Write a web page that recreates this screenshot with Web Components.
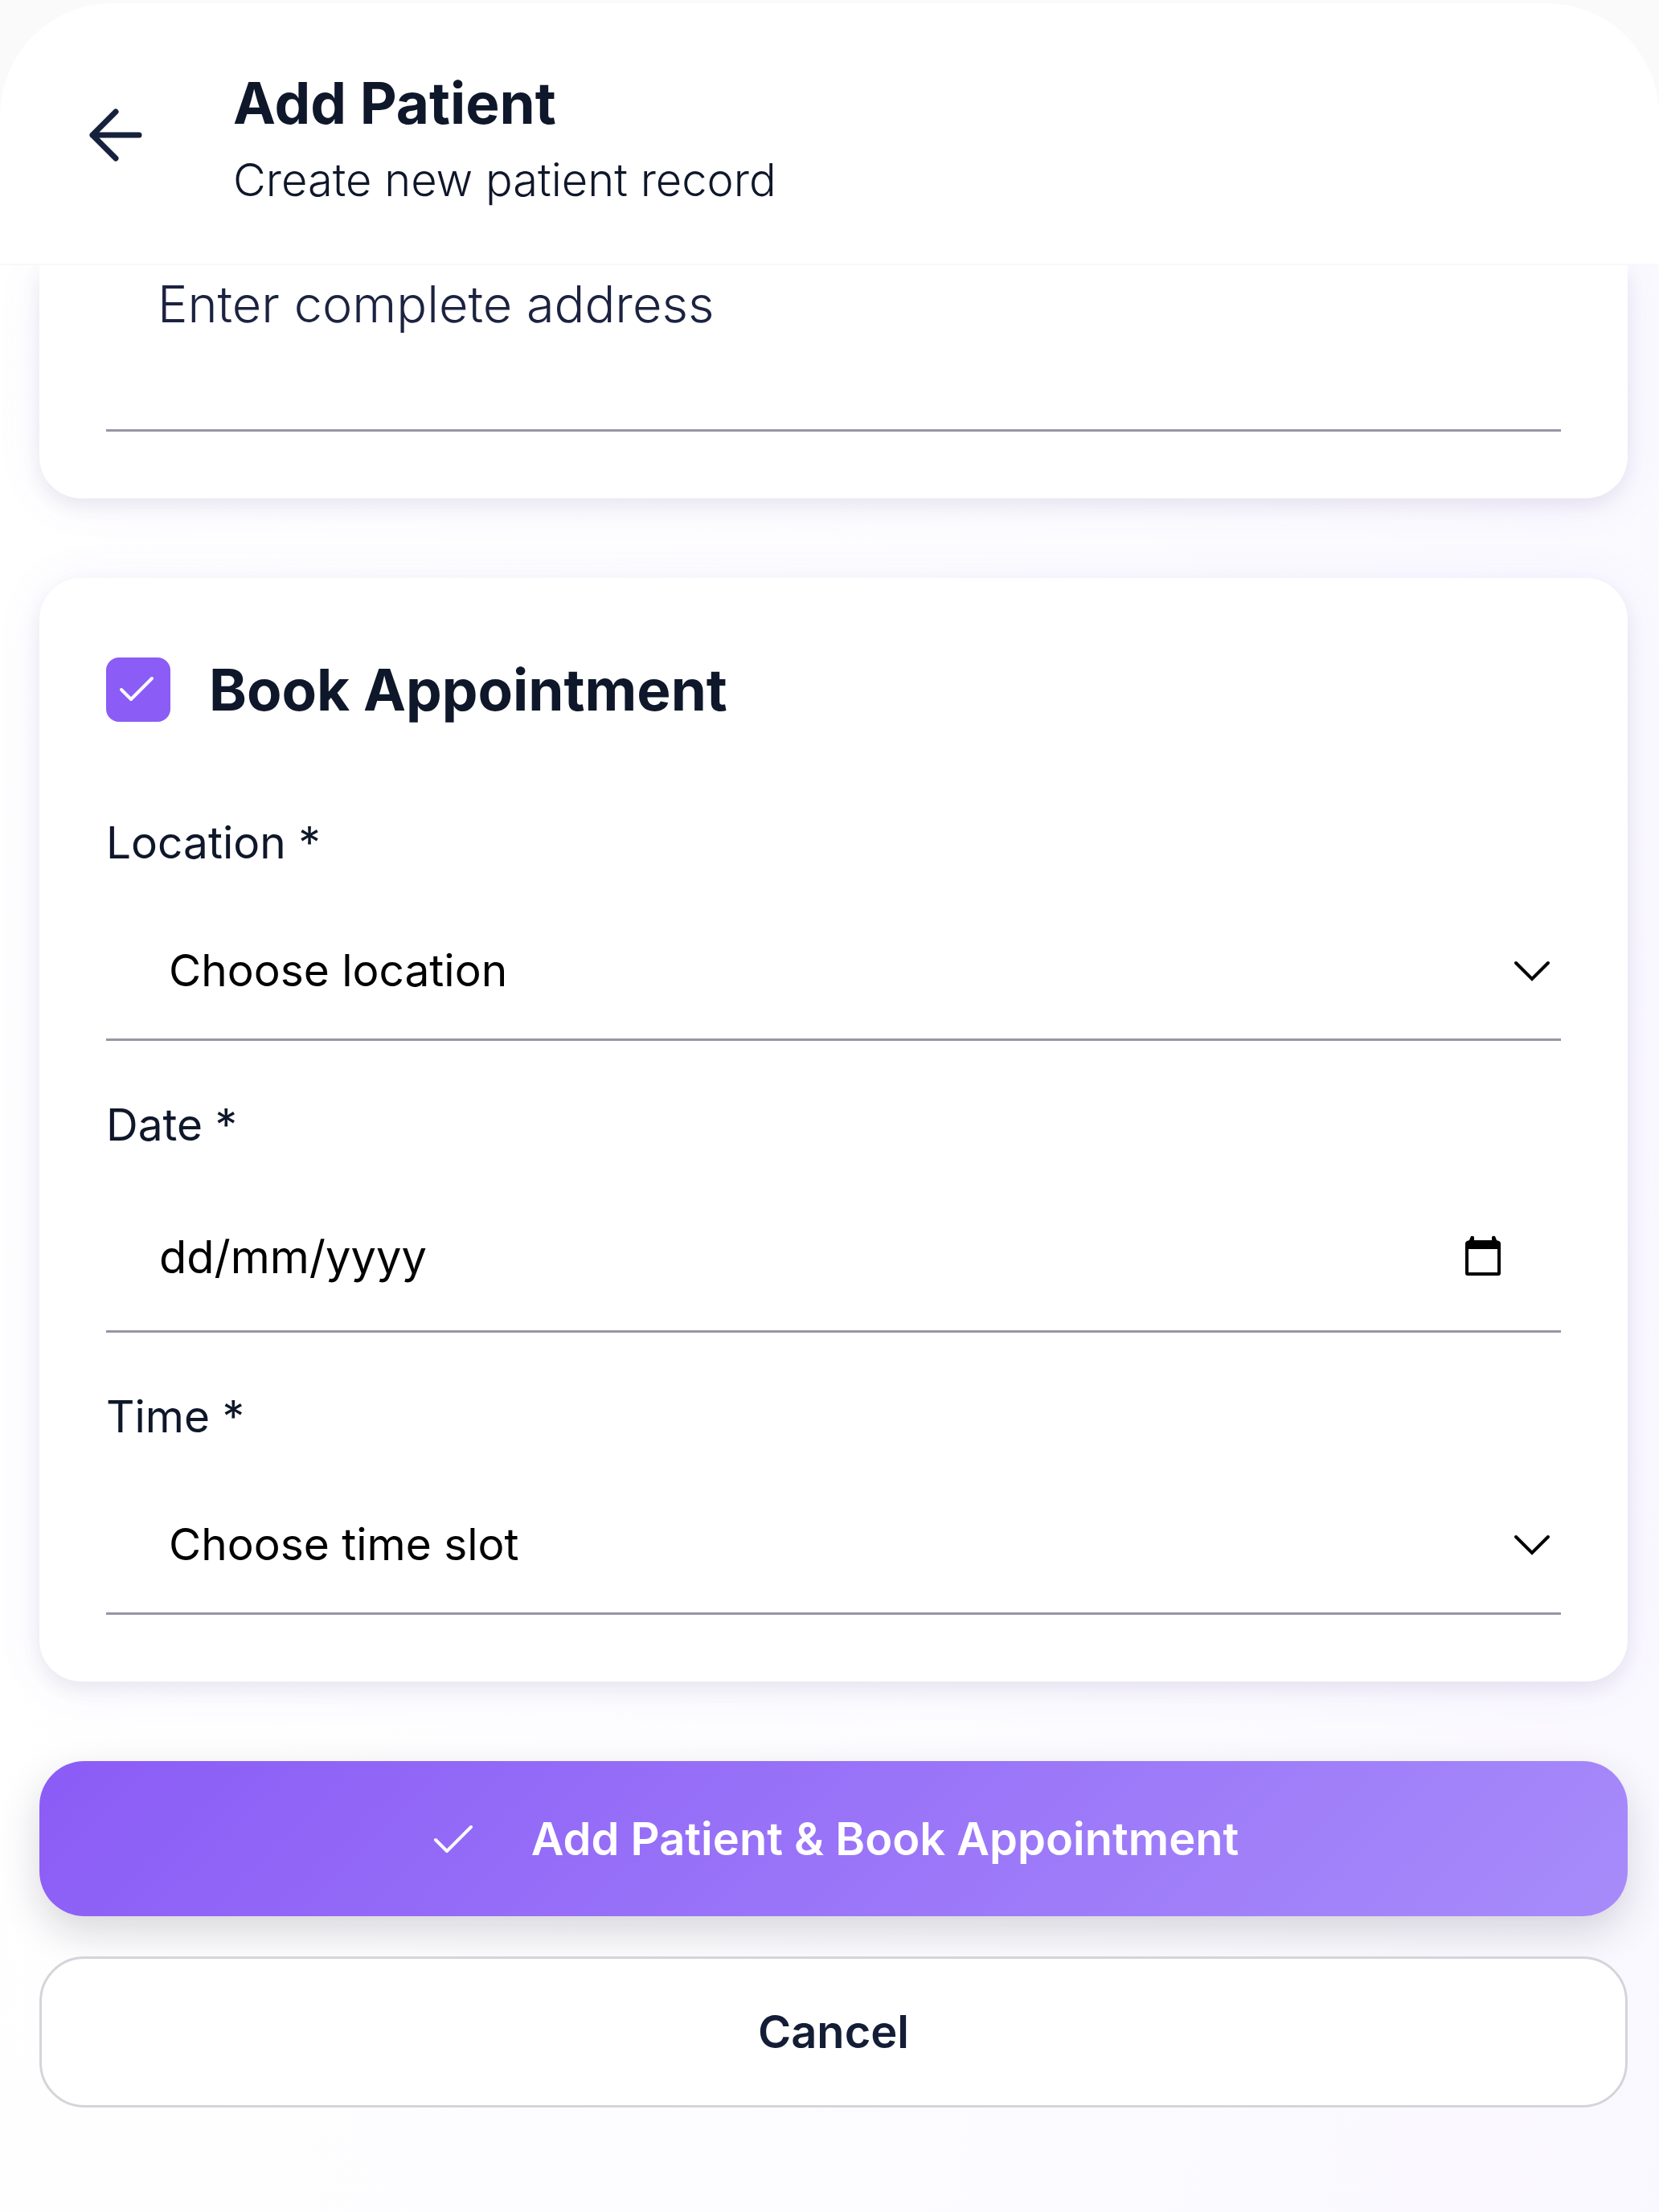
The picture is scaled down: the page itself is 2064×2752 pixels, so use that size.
<!doctype html>
<html lang="en">
<head>
    <meta charset="UTF-8">
    <meta name="viewport" content="width=device-width, initial-scale=1.0">
    <title>Add Patient</title>
    <style>
        body {
            --ink: #0f172a;
            --line: #9696a6;
            --accent: #8b5cf6;
            --accent-light: #a78bfa;
            --text-large: 56px;
            margin: 0;
            min-height: 100vh;
            color: var(--ink);
            font-family: Inter, "Liberation Sans", sans-serif;
            font-size: 55px;
            line-height: 64px;
            background: linear-gradient(100deg, #ffffff 0%, #fdfdff 50%, #faf8ff 100%);
        }
        main {
            display: flex;
            flex-direction: column;
            gap: 99px;
            padding: 0 39px 128px 49px;
        }
        .actions {
            display: flex;
            flex-direction: column;
            gap: 50px;
        }
    </style>
</head>
<body>
<page-header>
    <span slot="title">Add Patient</span>
    <span slot="subtitle">Create new patient record</span>
</page-header>
<main>
    <form-card continued>
        <address-field placeholder="Enter complete address"></address-field>
    </form-card>
    <form-card>
        <check-heading>Book Appointment</check-heading>
        <select-field label="Location *" empty="Choose location"></select-field>
        <date-field label="Date *" placeholder="dd/mm/yyyy"></date-field>
        <select-field label="Time *" empty="Choose time slot"></select-field>
    </form-card>
    <div class="actions">
        <action-button primary>Add Patient &amp; Book Appointment</action-button>
        <action-button>Cancel</action-button>
    </div>
</main>
<script>
    class PageHeader extends HTMLElement {
        constructor() {
            super();
            const shadowRoot = this.attachShadow({mode: 'open'});
            shadowRoot.innerHTML = `
                <style>
                    :host { display: flow-root; background: #fafafa; }
                    header {
                        display: flex;
                        align-items: center;
                        gap: 98px;
                        margin-top: 4px;
                        padding: 78px 96px 74px;
                        border-radius: 140px 140px 0 0;
                        border-bottom: 2px solid #f8f8fa;
                        background: #fff;
                    }
                    button {
                        display: flex;
                        padding: 0;
                        border: 0;
                        background: none;
                        color: #16213c;
                    }
                    .titles { display: flex; flex-direction: column; gap: 20px; }
                    h1 { margin: 0; font-size: 71px; line-height: 92px; font-weight: 700; }
                    p { margin: 0; font-size: var(--text-large); line-height: 60px; font-weight: 300; }
                </style>
                <header>
                    <button type="button" aria-label="Back">
                        <svg width="96" height="96" viewBox="0 0 96 96" fill="none" stroke="currentColor"
                             stroke-width="7" stroke-linecap="round" stroke-linejoin="round">
                            <path d="M77 48H19M48 19L19 48L48 77"/>
                        </svg>
                    </button>
                    <div class="titles">
                        <h1><slot name="title"></slot></h1>
                        <p><slot name="subtitle"></slot></p>
                    </div>
                </header>`;
        }
    }

    class FormCard extends HTMLElement {
        constructor() {
            super();
            const shadowRoot = this.attachShadow({mode: 'open'});
            shadowRoot.innerHTML = `
                <style>
                    :host {
                        display: flex;
                        flex-direction: column;
                        gap: 72px;
                        padding: 83px;
                        border-radius: 52px;
                        background: #fff;
                        box-shadow: 0 10px 24px rgba(30, 20, 60, 0.07), 0 4px 60px rgba(110, 90, 220, 0.07);
                    }
                    /* the upper part of this card is scrolled under the header */
                    :host([continued]) {
                        padding-top: 0;
                        border-top-left-radius: 0;
                        border-top-right-radius: 0;
                        clip-path: inset(0 -80px -98px -80px);
                    }
                </style>
                <slot></slot>`;
        }
    }

    class AddressField extends HTMLElement {
        constructor() {
            super();
            const shadowRoot = this.attachShadow({mode: 'open'});
            shadowRoot.innerHTML = `
                <style>
                    :host { display: block; }
                    textarea {
                        display: block;
                        box-sizing: border-box;
                        width: 100%;
                        height: 207px;
                        padding: 8px 64px;
                        border: 0;
                        border-bottom: 3px solid var(--line);
                        resize: none;
                        overflow: hidden;
                        background: none;
                        font: inherit;
                        font-size: 63px;
                        line-height: 80px;
                        font-weight: 300;
                    }
                    textarea::placeholder { color: #1c2340; }
                </style>
                <textarea aria-label="Address"></textarea>`;
            shadowRoot.querySelector('textarea').placeholder = this.getAttribute('placeholder');
        }
    }

    class CheckHeading extends HTMLElement {
        constructor() {
            super();
            const shadowRoot = this.attachShadow({mode: 'open'});
            shadowRoot.innerHTML = `
                <style>
                    :host { display: block; margin-bottom: 30px; }
                    label {
                        display: flex;
                        align-items: center;
                        gap: 48px;
                        font-size: 71px;
                        line-height: 112px;
                        font-weight: 700;
                    }
                    .box { display: grid; }
                    .box > * { grid-area: 1 / 1; }
                    input {
                        appearance: none;
                        width: 80px;
                        height: 80px;
                        margin: 0;
                        border-radius: 16px;
                        border: 2px solid var(--accent);
                    }
                    input:checked { background: var(--accent); }
                    svg { pointer-events: none; visibility: hidden; }
                    input:checked + svg { visibility: visible; }
                </style>
                <label>
                    <span class="box">
                        <input type="checkbox" checked>
                        <svg width="80" height="80" viewBox="0 0 80 80" fill="none" stroke="#fff"
                             stroke-width="4" stroke-linecap="round" stroke-linejoin="round">
                            <path d="M19 40L31 52L57 26"/>
                        </svg>
                    </span>
                    <span><slot></slot></span>
                </label>`;
        }
    }

    // label above an underlined control, shared by the fields below
    const fieldStyle = `
        :host { display: flex; flex-direction: column; gap: 41px; }
        label { font-weight: 400; }
        .control {
            display: grid;
            align-items: center;
            border-bottom: 3px solid var(--line);
            color: #000;
        }
        .control > * { grid-area: 1 / 1; }
        select, input {
            appearance: none;
            width: 100%;
            box-sizing: border-box;
            margin: 0;
            border: 0;
            background: none;
            color: inherit;
            font: inherit;
        }
        svg { display: block; }`;

    class SelectField extends HTMLElement {
        constructor() {
            super();
            const shadowRoot = this.attachShadow({mode: 'open'});
            shadowRoot.innerHTML = `
                <style>
                    ${fieldStyle}
                    select { height: 171px; padding: 0 78px; }
                    svg { justify-self: end; margin-right: 8px; pointer-events: none; }
                </style>
                <label for="field">${this.getAttribute('label')}</label>
                <div class="control">
                    <select id="field"><option>${this.getAttribute('empty')}</option></select>
                    <svg width="56" height="40" viewBox="0 0 56 40" fill="none" stroke="currentColor"
                         stroke-width="4" stroke-linecap="round" stroke-linejoin="miter">
                        <path d="M8 11L28 31L48 11"/>
                    </svg>
                </div>`;
        }
    }

    class DateField extends HTMLElement {
        constructor() {
            super();
            const shadowRoot = this.attachShadow({mode: 'open'});
            shadowRoot.innerHTML = `
                <style>
                    ${fieldStyle}
                    input { height: 183px; padding: 0 66px; font-size: var(--text-large); }
                    input::placeholder { color: inherit; }
                    button {
                        justify-self: end;
                        margin-right: 66px;
                        padding: 0;
                        border: 0;
                        background: none;
                        color: inherit;
                    }
                </style>
                <label for="field">${this.getAttribute('label')}</label>
                <div class="control">
                    <input id="field" type="text" placeholder="${this.getAttribute('placeholder')}">
                    <button type="button" aria-label="Open calendar">
                        <svg width="60" height="60" viewBox="0 0 60 60" fill="currentColor">
                            <path fill-rule="evenodd" d="M14 4Q17 3 18 5V9H40V5Q41 3 44 4L46 9Q51 10 51 13V50Q51 53 48 53H10Q7 53 7 50V13Q7 10 12 9ZM11 20V49H47V20Z"/>
                        </svg>
                    </button>
                </div>`;
        }
    }

    class ActionButton extends HTMLElement {
        constructor() {
            super();
            const shadowRoot = this.attachShadow({mode: 'open'});
            shadowRoot.innerHTML = `
                <style>
                    :host { display: block; }
                    button {
                        display: flex;
                        align-items: center;
                        justify-content: center;
                        gap: 64px;
                        box-sizing: border-box;
                        width: 100%;
                        min-height: 188px;
                        border: 3px solid #d3d5da;
                        border-radius: 56px;
                        background: #fff;
                        color: #141d36;
                        font: inherit;
                        font-size: var(--text-large);
                        font-weight: 600;
                    }
                    svg { display: none; }
                    :host([primary]) button {
                        min-height: 193px;
                        border: 0;
                        background: linear-gradient(135deg, var(--accent), var(--accent-light));
                        color: #fff;
                        box-shadow: 0 20px 50px rgba(20, 20, 40, 0.16);
                    }
                    :host([primary]) svg { display: block; }
                </style>
                <button type="button">
                    <svg width="64" height="64" viewBox="0 0 64 64" fill="none" stroke="currentColor"
                         stroke-width="4" stroke-linecap="round" stroke-linejoin="round">
                        <path d="M9 33L23 47L53 17"/>
                    </svg>
                    <span><slot></slot></span>
                </button>`;
        }
    }

    window.customElements.define('page-header', PageHeader);
    window.customElements.define('form-card', FormCard);
    window.customElements.define('address-field', AddressField);
    window.customElements.define('check-heading', CheckHeading);
    window.customElements.define('select-field', SelectField);
    window.customElements.define('date-field', DateField);
    window.customElements.define('action-button', ActionButton);
</script>
</body>
</html>
